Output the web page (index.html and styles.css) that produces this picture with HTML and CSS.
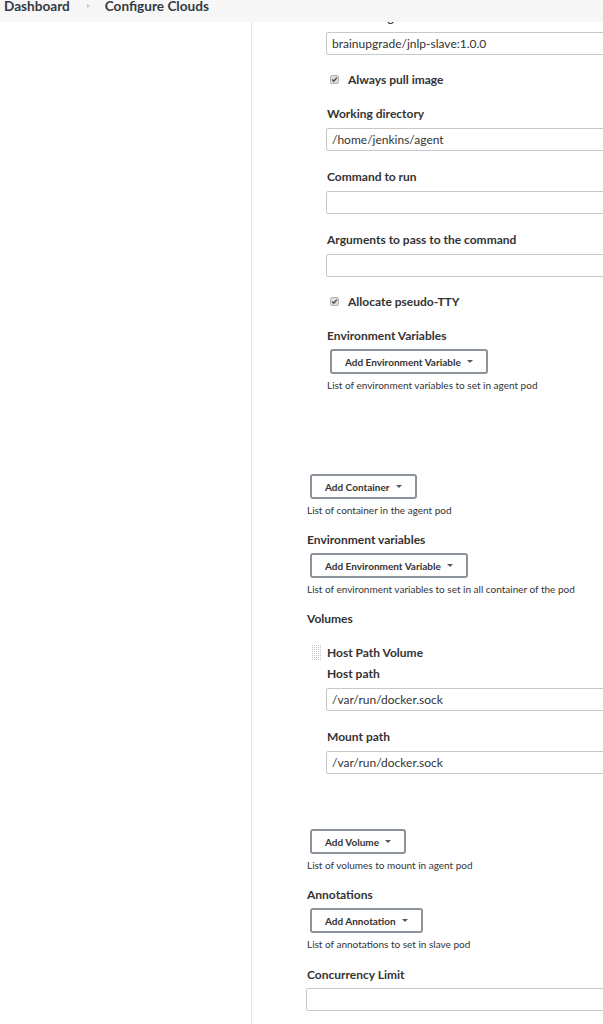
FILE: index.html
```html
<!DOCTYPE html>
<html lang="en">
<head>
<meta charset="utf-8">
<title>Configure Clouds</title>
<link rel="stylesheet" href="styles.css">
</head>
<body>
<header class="topbar">
  <a class="crumb" href="#">Dashboard</a>
  <span class="crumb-sep"></span>
  <a class="crumb" href="#">Configure Clouds</a>
</header>
<div class="layout">
  <aside class="side"></aside>
  <main class="content">
    <div class="outer">
      <div class="inner">
        <div class="field first">
          <label class="label">Docker image</label>
          <input class="input" type="text" value="brainupgrade/jnlp-slave:1.0.0">
        </div>
        <div class="check-row">
          <span class="checkbox"><svg width="9" height="9" viewBox="0 0 9 9"><rect x="0.5" y="0.5" width="8" height="8" rx="1.5" fill="#dcdcdc" stroke="#b4b4b4"/><path d="M2.2 4.6 L3.8 6.2 L6.9 2.6" fill="none" stroke="#4a4a4a" stroke-width="1.4"/></svg></span>
          <span class="check-text">Always pull image</span>
        </div>
        <div class="field after-check">
          <label class="label">Working directory</label>
          <input class="input" type="text" value="/home/jenkins/agent">
        </div>
        <div class="field">
          <label class="label">Command to run</label>
          <input class="input" type="text" value="">
        </div>
        <div class="field">
          <label class="label">Arguments to pass to the command</label>
          <input class="input" type="text" value="">
        </div>
        <div class="check-row">
          <span class="checkbox"><svg width="9" height="9" viewBox="0 0 9 9"><rect x="0.5" y="0.5" width="8" height="8" rx="1.5" fill="#dcdcdc" stroke="#b4b4b4"/><path d="M2.2 4.6 L3.8 6.2 L6.9 2.6" fill="none" stroke="#4a4a4a" stroke-width="1.4"/></svg></span>
          <span class="check-text">Allocate pseudo-TTY</span>
        </div>
        <div class="group after-check">
          <div class="label">Environment Variables</div>
          <button class="btn" type="button">Add Environment Variable<span class="caret"></span></button>
          <div class="help">List of environment variables to set in agent pod</div>
        </div>
      </div>

      <div class="group containers">
        <button class="btn" type="button">Add Container<span class="caret"></span></button>
        <div class="help">List of container in the agent pod</div>
      </div>
      <div class="group">
        <div class="label">Environment variables</div>
        <button class="btn" type="button">Add Environment Variable<span class="caret"></span></button>
        <div class="help">List of environment variables to set in all container of the pod</div>
      </div>
      <div class="group">
        <div class="label">Volumes</div>
        <div class="volume">
          <span class="handle"></span>
          <div class="volume-body">
            <div class="volume-title">Host Path Volume</div>
            <div class="field vol-field">
              <label class="label">Host path</label>
              <input class="input" type="text" value="/var/run/docker.sock">
            </div>
            <div class="field vol-field">
              <label class="label">Mount path</label>
              <input class="input" type="text" value="/var/run/docker.sock">
            </div>
          </div>
        </div>
      </div>
      <div class="group volumes-btn">
        <button class="btn" type="button">Add Volume<span class="caret"></span></button>
        <div class="help">List of volumes to mount in agent pod</div>
      </div>
      <div class="group">
        <div class="label">Annotations</div>
        <button class="btn" type="button">Add Annotation<span class="caret"></span></button>
        <div class="help">List of annotations to set in slave pod</div>
      </div>
      <div class="group concurrency">
        <label class="label">Concurrency Limit</label>
        <input class="input wide" type="text" value="">
      </div>
    </div>
  </main>
</div>
</body>
</html>
```

FILE: styles.css
```css
html, body {
  margin: 0;
  padding: 0;
  height: 100%;
  overflow: hidden;
  background: #ffffff;
}

body {
  font-family: "Lato", "Open Sans", "DejaVu Sans", sans-serif;
  color: #333;
}

.topbar {
  height: 22px;
  background: #f7f7f8;
  display: flex;
  align-items: flex-start;
  padding-left: 4px;
  box-sizing: border-box;
}

.crumb {
  font-size: 13.6px;
  font-weight: 700;
  line-height: 13px;
  color: #333a41;
  text-decoration: none;
}

.crumb-sep {
  width: 0;
  height: 0;
  margin: 4px 15px 0 17px;
  border-top: 2.5px solid transparent;
  border-bottom: 2.5px solid transparent;
  border-left: 3px solid #c4c4c4;
}

.layout {
  display: grid;
  grid-template-columns: 252px 1fr;
  height: calc(100% - 22px);
}

.side {
  border-right: 1px solid #e6e6ea;
}

.content {
  overflow: hidden;
}

.outer {
  padding-left: 55px;
  width: 400px;
}

.inner {
  padding-left: 20px;
}

.label {
  display: block;
  font-size: 12px;
  font-weight: 700;
  line-height: 15px;
  height: 15px;
  color: #333;
  white-space: nowrap;
}

.field .label {
  margin-bottom: 7px;
}

.input {
  display: block;
  box-sizing: border-box;
  width: 340px;
  height: 23px;
  margin-left: -1px;
  border: 1px solid #c8c8c8;
  border-radius: 2px;
  padding: 0 5px;
  font-family: inherit;
  font-size: 12px;
  color: #333;
  background: #fff;
  outline: none;
}

.field {
  margin-top: 18px;
}

.field.first {
  margin-top: -12px;
}

.check-row {
  display: flex;
  align-items: center;
  height: 16px;
  margin-top: 16px;
  padding-left: 3px;
}

.checkbox {
  display: flex;
  width: 9px;
  height: 9px;
}

.check-text {
  margin-left: 9px;
  font-size: 12px;
  font-weight: 700;
  line-height: 15px;
}

.group {
  margin-top: 15px;
}

.group.after-check {
  margin-top: 19px;
}

.field.after-check {
  margin-top: 19px;
}

.group > .label + .btn {
  margin-top: 6px;
}

.btn {
  display: inline-flex;
  align-items: center;
  height: 25px;
  box-sizing: border-box;
  margin-left: 3px;
  padding: 0 13px 0 13px;
  border: 2px solid #8c939b;
  border-radius: 3px;
  background: #fff;
  font-family: inherit;
  font-size: 10px;
  font-weight: 700;
  color: #333;
  cursor: pointer;
}

.caret {
  width: 0;
  height: 0;
  margin-left: 6px;
  border-left: 3px solid transparent;
  border-right: 3px solid transparent;
  border-top: 3px solid #555;
}

.help {
  margin-top: 5px;
  font-size: 10px;
  line-height: 13px;
  color: #333;
  white-space: nowrap;
}

.group.containers {
  margin-top: 82px;
}

.volume {
  display: flex;
  margin-top: 19px;
}

.handle {
  flex: none;
  width: 10px;
  height: 16px;
  margin-left: 5px;
  margin-right: 5px;
  background-color: #c4c4c4;
  background-image:
    linear-gradient(to right, transparent 1px, #ffffff 1px),
    linear-gradient(to bottom, transparent 1px, #ffffff 1px);
  background-size: 2px 2px;
}

.volume-body {
  flex: 1;
}

.volume-title {
  font-size: 12px;
  font-weight: 700;
  line-height: 16px;
}

.field.vol-field {
  margin-top: 5px;
}

.field.vol-field + .field.vol-field {
  margin-top: 18px;
}

.group.volumes-btn {
  margin-top: 55px;
}

.group.concurrency {
  margin-top: 16px;
}

.concurrency .label {
  margin-bottom: 6px;
}
```
